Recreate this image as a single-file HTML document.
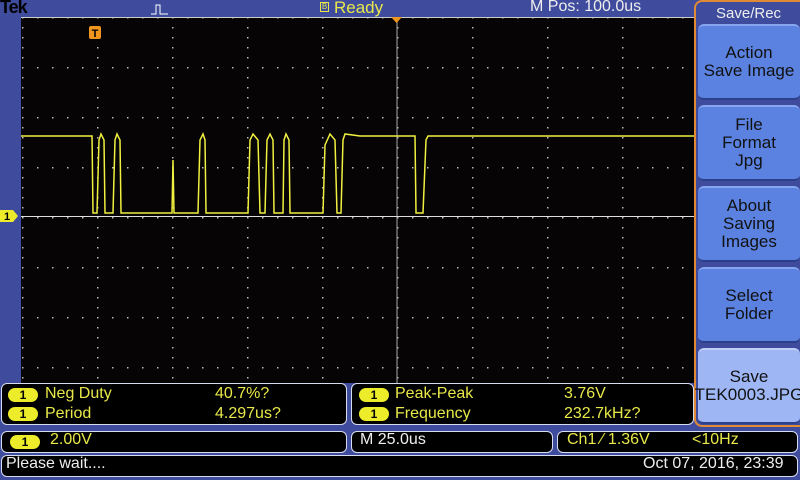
<!DOCTYPE html>
<html><head><meta charset="utf-8"><style>
*{margin:0;padding:0;box-sizing:border-box}
body{width:800px;height:480px;background:#3f4c9e;overflow:hidden;position:relative;font-family:"Liberation Sans",sans-serif}
.t{position:absolute;white-space:nowrap}
.box{position:absolute;background:#000;border:1.5px solid #d8dcef;border-radius:6px}
.y{color:#e8e84a}
.w{color:#eee}
.pill{position:absolute;width:30px;height:14px;border-radius:7px;background:#ecec2a;color:#000;font-size:12px;line-height:14px;text-align:center;font-weight:bold}
.btn{position:absolute;left:698px;width:102px;height:76px;border-radius:6px;background:#5b82e0;color:#111;font-size:17px;text-align:center;display:flex;align-items:center;justify-content:center;line-height:18px;border-top:2px solid #86a6f0;border-bottom:2px solid #2c3f8a}
.m{font-size:16px}
</style></head><body>
<div class="t" style="left:0px;top:-3px;font-size:18px;font-weight:bold;color:#000;letter-spacing:-1px">Tek</div>
<svg style="position:absolute;left:150px;top:3px" width="22" height="12"><path d="M1 11H6V2H10V11H18" stroke="#fff" fill="none" stroke-width="1"/></svg>
<div class="t" style="left:320px;top:2px;width:9px;height:10px;border:1px solid #e8e84a;font-size:8px;line-height:8px;color:#e8e84a;text-align:center">B</div>
<div class="t y" style="left:334px;top:-2px;font-size:17px">Ready</div>
<div class="t w" style="left:530px;top:-2px;font-size:16px">M Pos: 100.0us</div>

<svg style="position:absolute;left:0;top:0" width="800" height="480">
<defs>
<pattern id="pv" x="22" y="17" width="75" height="10" patternUnits="userSpaceOnUse"><rect width="1.5" height="1.5" fill="#bbb"/></pattern>
<pattern id="ph" x="22" y="17" width="15" height="50" patternUnits="userSpaceOnUse"><rect width="1.5" height="1.5" fill="#bbb"/></pattern>
<clipPath id="c"><rect x="21" y="17" width="673" height="366"/></clipPath>
</defs>
<rect x="21" y="17" width="673" height="366" fill="#060404"/>
<g clip-path="url(#c)">
<rect x="21" y="17" width="673" height="366" fill="url(#pv)"/>
<rect x="21" y="17" width="673" height="366" fill="url(#ph)"/>
<line x1="397" y1="17" x2="397" y2="383" stroke="#aaa" stroke-width="1"/>
<line x1="21" y1="216.5" x2="694" y2="216.5" stroke="#ddd" stroke-width="1"/>
<polyline fill="none" stroke="#f0f040" stroke-width="1.5" points="21,136 92,136 93,213 97,213 99,140 101,134 104,140 105,213 113,213 115,140 117,134 120,140 121,213 172,213 173,160 174,213 198,213 200,140 203,134 205,140 206,213 248,213 250,140 253,134 258,140 260,213 265,213 267,140 270,134 273,140 274,213 283,213 284,140 286,134 289,140 290,213 323,213 325,145 330,134 335,140 337,213 341,213 343,140 345,134 360,136 415,136 416,213 423,213 426,140 428,136 694,136"/>
</g>
<line x1="21" y1="17.5" x2="694" y2="17.5" stroke="#ccc" stroke-width="1"/>
<path d="M391 17h11l-5.5 6z" fill="#f0951e"/>
<rect x="89" y="26" width="12" height="13" rx="2" fill="#f0951e"/>
<text x="95" y="37" font-size="11" font-weight="bold" text-anchor="middle" fill="#000" font-family="Liberation Sans">T</text>
<path d="M0 210h13l5 6-5 6H0z" fill="#ecec2a"/>
<text x="4" y="220" font-size="11" font-weight="bold" fill="#000" font-family="Liberation Sans">1</text>
</svg>

<div style="position:absolute;left:694px;top:0;width:106px;height:427px;border:2px solid #e08a35;border-right:none;border-radius:8px 0 0 8px;background:#3f4c9e"></div>
<div class="t w" style="left:716px;top:5px;font-size:15px">Save/Rec</div>
<div class="btn" style="top:24px">Action<br>Save Image</div>
<div class="btn" style="top:105px">File<br>Format<br>Jpg</div>
<div class="btn" style="top:186px">About<br>Saving<br>Images</div>
<div class="btn" style="top:267px">Select<br>Folder</div>
<div class="btn" style="top:348px;background:#9fb6f5;border-top-color:#c0d0fa">Save<br>TEK0003.JPG</div>

<div class="box" style="left:1px;top:383px;width:346px;height:42px"></div>
<div class="pill" style="left:8px;top:388px">1</div>
<div class="t y m" style="left:45px;top:385px">Neg Duty</div>
<div class="t y m" style="left:215px;top:385px">40.7%?</div>
<div class="pill" style="left:8px;top:407px">1</div>
<div class="t y m" style="left:45px;top:405px">Period</div>
<div class="t y m" style="left:215px;top:405px">4.297us?</div>

<div class="box" style="left:351px;top:383px;width:343px;height:42px"></div>
<div class="pill" style="left:359px;top:388px">1</div>
<div class="t y m" style="left:395px;top:385px">Peak-Peak</div>
<div class="t y m" style="left:564px;top:385px">3.76V</div>
<div class="pill" style="left:359px;top:407px">1</div>
<div class="t y m" style="left:395px;top:405px">Frequency</div>
<div class="t y m" style="left:564px;top:405px">232.7kHz?</div>

<div class="box" style="left:1px;top:431px;width:346px;height:22px"></div>
<div class="pill" style="left:10px;top:435px">1</div>
<div class="t y m" style="left:50px;top:431px">2.00V</div>
<div class="box" style="left:351px;top:431px;width:202px;height:22px"></div>
<div class="t w m" style="left:360px;top:431px">M 25.0us</div>
<div class="box" style="left:557px;top:431px;width:241px;height:22px"></div>
<div class="t y m" style="left:567px;top:431px">Ch1 ⁄ 1.36V</div>
<div class="t y m" style="left:692px;top:431px">&lt;10Hz</div>
<div class="box" style="left:1px;top:455px;width:797px;height:22px"></div>
<div class="t w m" style="left:6px;top:455px">Please wait....</div>
<div class="t w m" style="left:643px;top:455px">Oct 07, 2016, 23:39</div>
</body></html>
